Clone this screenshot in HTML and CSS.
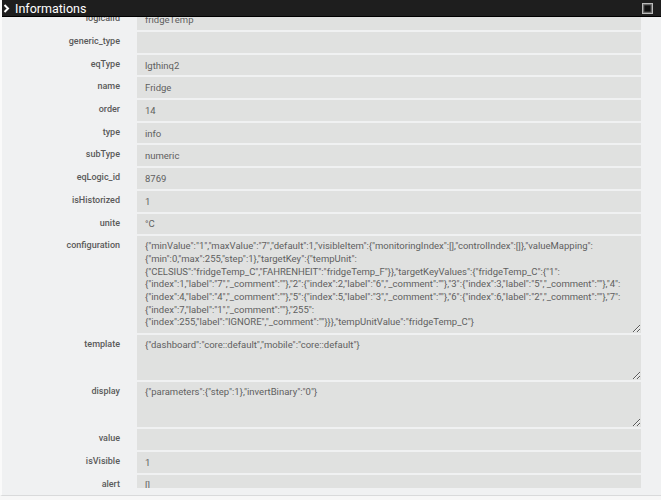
FILE: index.html
```html
<!DOCTYPE html>
<html lang="en">
<head>
    <meta charset="UTF-8">
    <title>Informations</title>
    <link rel="stylesheet" href="styles.css">
</head>
<body>

    <div class="panel">
        <div class="panel-header">
            <svg class="chevron" width="7" height="9" viewBox="0 0 7 9"><polyline points="1.5,1 5,4.5 1.5,8" fill="none" stroke="#fff" stroke-width="2"/></svg>
            <span class="panel-title">Informations</span>
            <svg class="maximize" width="11" height="11" viewBox="0 0 11 11"><rect x="0.5" y="0.5" width="10" height="10" fill="#777" stroke="#bbb"/><rect x="2" y="2" width="7" height="7" fill="#111" stroke="#555" stroke-width="0.8"/></svg>
        </div>

        <div class="panel-body">
            <div class="info-grid">
                <label>logicalId</label>
                <input type="text" value="fridgeTemp" readonly>

                <label>generic_type</label>
                <input type="text" value="" readonly>

                <label>eqType</label>
                <input type="text" value="lgthinq2" readonly>

                <label>name</label>
                <input type="text" value="Fridge" readonly>

                <label>order</label>
                <input type="text" value="14" readonly>

                <label>type</label>
                <input type="text" value="info" readonly>

                <label>subType</label>
                <input type="text" value="numeric" readonly>

                <label>eqLogic_id</label>
                <input type="text" value="8769" readonly>

                <label>isHistorized</label>
                <input type="text" value="1" readonly>

                <label>unite</label>
                <input type="text" value="°C" readonly>

                <label>configuration</label>
                <textarea class="big" readonly>{"minValue":"1","maxValue":"7","default":1,"visibleItem":{"monitoringIndex":[],"controlIndex":[]},"valueMapping":{"min":0,"max":255,"step":1},"targetKey":{"tempUnit":{"CELSIUS":"fridgeTemp_C","FAHRENHEIT":"fridgeTemp_F"}},"targetKeyValues":{"fridgeTemp_C":{"1":{"index":1,"label":"7","_comment":""},"2":{"index":2,"label":"6","_comment":""},"3":{"index":3,"label":"5","_comment":""},"4":{"index":4,"label":"4","_comment":""},"5":{"index":5,"label":"3","_comment":""},"6":{"index":6,"label":"2","_comment":""},"7":{"index":7,"label":"1","_comment":""},"255":{"index":255,"label":"IGNORE","_comment":""}}},"tempUnitValue":"fridgeTemp_C"}</textarea>

                <label>template</label>
                <textarea readonly>{"dashboard":"core::default","mobile":"core::default"}</textarea>

                <label>display</label>
                <textarea readonly>{"parameters":{"step":1},"invertBinary":"0"}</textarea>

                <label>value</label>
                <input type="text" value="" readonly>

                <label>isVisible</label>
                <input type="text" value="1" readonly>

                <label>alert</label>
                <input type="text" value="[]" readonly>
            </div>
        </div>
    </div>

</body>
</html>
```

FILE: styles.css
```css
body {
    margin: 0;
    background-color: #f7f7f7;
    font-family: Roboto, "Liberation Sans", sans-serif;
    height: 500px;
    overflow: hidden;
}
.panel {
    background-color: #f0f1f2;
    border-left: 2px solid #fafafa;
    border-bottom: 1px solid #d9dadb;
    padding-bottom: 7px;
}
.panel-header {
    height: 16px;
    background-color: #1e1e1e;
    border-bottom: 1px solid #000;
    display: flex;
    align-items: center;
    padding: 0 8px 0 1px;
    color: #fff;
}
.chevron {
    margin-right: 5px;
}
.panel-title {
    font-size: 12.5px;
    flex-grow: 1;
}
.maximize {
    display: block;
}
.panel-body {
    height: 471px;
    overflow: hidden;
}
.info-grid {
    margin-top: -7.7px;
    display: grid;
    grid-template-columns: 118px 504px;
    column-gap: 17px;
    row-gap: 2px;
}
.info-grid label {
    text-align: right;
    font-size: 9px;
    font-weight: 500;
    color: #5a5a5a;
    padding-top: 4px;
}
.info-grid input,
.info-grid textarea {
    box-sizing: border-box;
    margin: 0;
    border: none;
    outline: none;
    background-color: #e0e1e0;
    color: #5f5f5f;
    font-family: Roboto, "Liberation Sans", sans-serif;
    font-size: 9.5px;
    width: 100%;
}
.info-grid input {
    height: 20.7px;
    padding: 0 8px;
}
.info-grid textarea {
    height: 45px;
    padding: 4px 2px 4px 8px;
    line-height: 12.7px;
    resize: vertical;
    overflow: hidden;
}
.info-grid textarea.big {
    height: 97px;
}
```
